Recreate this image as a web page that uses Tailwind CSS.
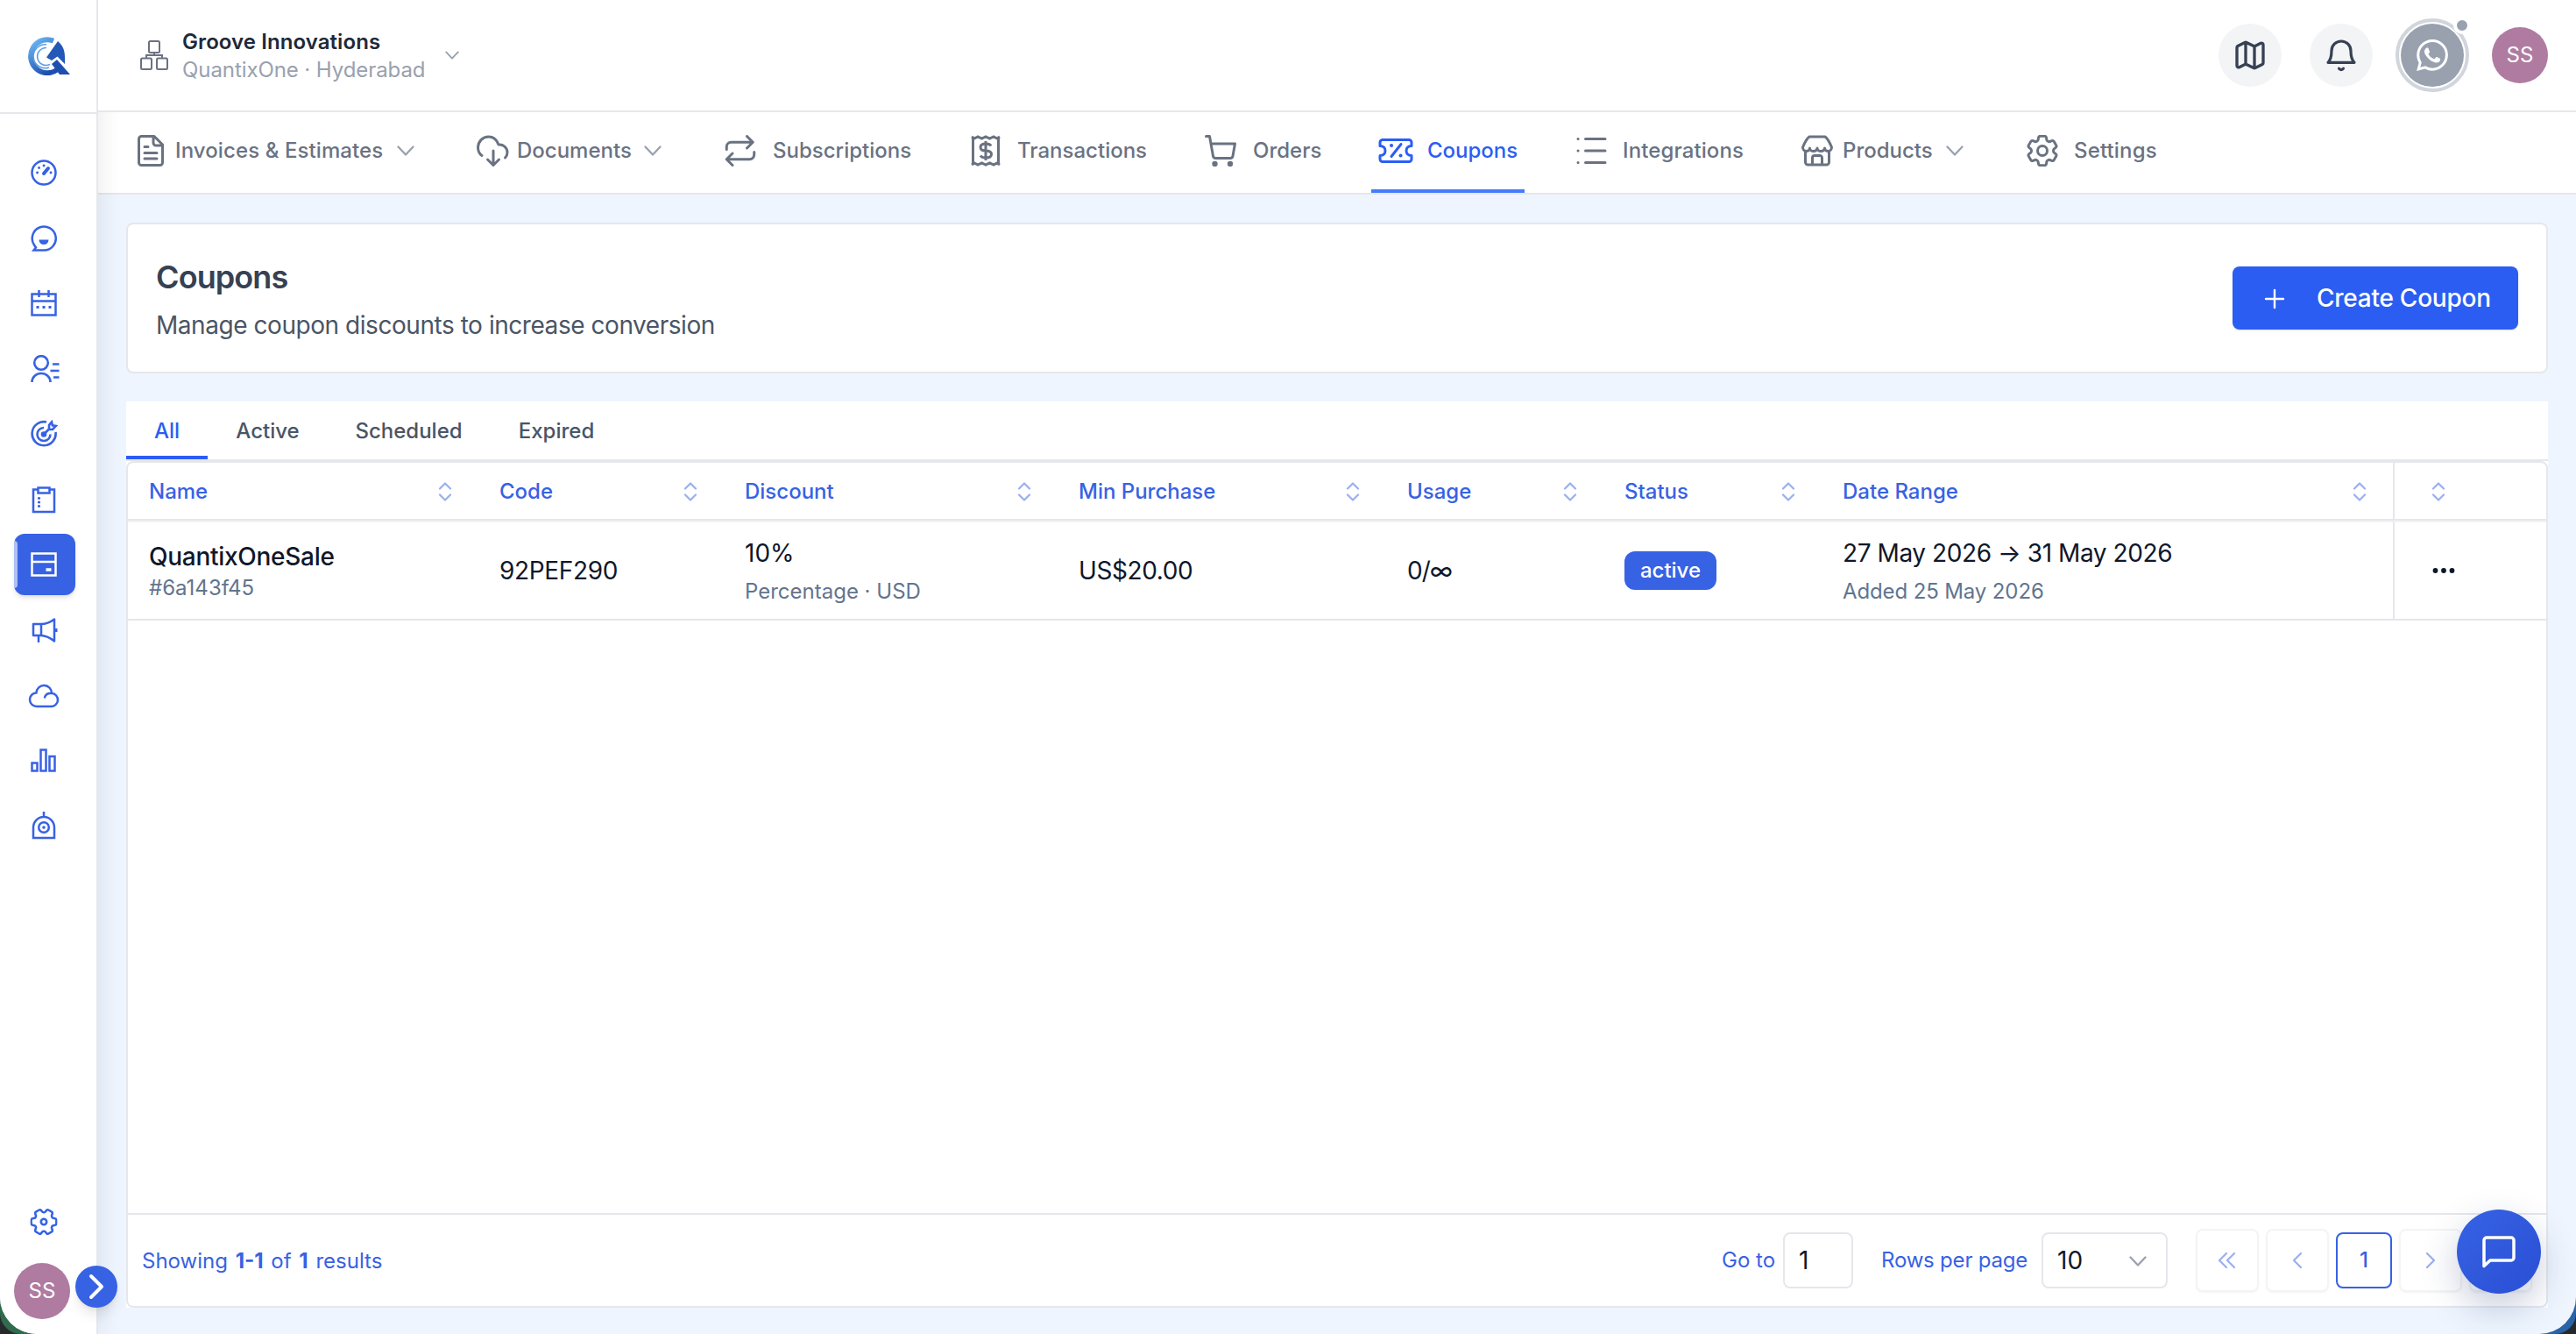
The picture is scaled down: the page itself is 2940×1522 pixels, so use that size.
<!DOCTYPE html>
<html lang="en">
<head>
    <meta charset="UTF-8">
    <meta name="viewport" content="width=device-width, initial-scale=1.0">
    <title>Coupons - QuantixOne</title>
    <script src="https://cdn.jsdelivr.net/npm/@tailwindcss/browser@4"></script>
</head>
<body class="w-[2940px] h-[1522px] overflow-hidden bg-[#26292c] font-['Inter',sans-serif] text-2xl text-gray-500">
    <!-- Shared icons -->
    <svg class="hidden">
        <symbol id="chevron-down" viewBox="0 0 20 20"><path d="M1.500 5.500l8.500 9 8.500-9" fill="none" stroke="currentColor" stroke-width="2.300" stroke-linecap="round" stroke-linejoin="round"/></symbol>
        <symbol id="sort" viewBox="0 0 16 24"><path d="M2 8.500l6-6 6 6M2 15.500l6 6 6-6" fill="none" stroke="currentColor" stroke-width="2.200" stroke-linecap="round" stroke-linejoin="round"/></symbol>
        <symbol id="cog" viewBox="2.300 2.300 19.400 19.400"><path fill="none" stroke="currentColor" stroke-linejoin="round" d="M9.594 3.940c.09-.542.56-.94 1.110-.94h2.593c.55 0 1.020.398 1.110.94l.213 1.281c.063.374.313.686.645.87.074.04.147.083.22.127.325.196.72.257 1.075.124l1.217-.456a1.125 1.125 0 0 1 1.370.49l1.296 2.247a1.125 1.125 0 0 1-.26 1.431l-1.003.827c-.293.241-.438.613-.43.992a7.723 7.723 0 0 1 0 .255c-.008.378.137.75.43.991l1.004.827c.424.35.534.955.26 1.430l-1.298 2.247a1.125 1.125 0 0 1-1.369.491l-1.217-.456c-.355-.133-.75-.072-1.076.124a6.470 6.470 0 0 1-.22.128c-.331.183-.581.495-.644.869l-.213 1.281c-.09.543-.56.94-1.110.94h-2.594c-.55 0-1.019-.398-1.110-.94l-.213-1.281c-.062-.374-.312-.686-.644-.87a6.520 6.520 0 0 1-.22-.127c-.325-.196-.72-.257-1.076-.124l-1.217.456a1.125 1.125 0 0 1-1.369-.49l-1.297-2.247a1.125 1.125 0 0 1 .26-1.431l1.004-.827c.292-.24.437-.613.43-.991a6.932 6.932 0 0 1 0-.255c.007-.38-.138-.751-.43-.992l-1.004-.827a1.125 1.125 0 0 1-.26-1.430l1.297-2.247a1.125 1.125 0 0 1 1.370-.491l1.216.456c.356.133.751.072 1.076-.124.072-.044.146-.086.22-.128.332-.183.582-.495.644-.869l.214-1.280Z"/></symbol>
    </svg>

    <div class="h-full overflow-hidden rounded-b-[24px] bg-linear-to-r from-[#2f6b4c] to-[#2a64a8]">
    <div class="relative flex h-full overflow-hidden bg-[#eef5fe] rounded-b-[42px]">
        <!-- Sidebar -->
        <aside class="relative z-10 w-28 shrink-0 flex flex-col bg-white border-r-2 border-gray-200 shadow-[4px_0_24px_rgba(0,0,0,0.08)] text-[#3762e4]">
            <div class="h-[130px] shrink-0 border-b-2 border-gray-200 pl-8 pt-[42px]">
                <svg class="w-12 h-[44px]" viewBox="0 0 48 44">
                    <defs>
                        <linearGradient id="logo" x1="0" y1="0" x2="0.6" y2="1"><stop offset="0" stop-color="#6fbcf5"/><stop offset="1" stop-color="#1f4fae"/></linearGradient>
                    </defs>
                    <path d="M29 4.500A19 19 0 1 0 34 37" fill="none" stroke="url(#logo)" stroke-width="6"/>
                    <path d="M21 8.800A13.500 13.500 0 1 0 24 35M21 12.500A10 10 0 1 0 25 31.500" fill="none" stroke="#5b9de6" stroke-width="1.600"/>
                    <path d="M21 23.500L34 5c6 5 8 11 8 18v8L33.500 22.500 27 27z" fill="#2458b8"/>
                    <path d="M27 31l6-5 15 17H36z" fill="#1f4fae"/>
                </svg>
            </div>
            <nav class="flex flex-col pt-[30px] pl-4">
                <a class="w-[67px] h-[74.500px] flex items-center justify-center">
                    <svg class="w-8 h-8" viewBox="0 0 32 32" fill="none" stroke="currentColor" stroke-width="2.500"><circle cx="16" cy="16" r="13.500"/><path d="M16 17l5-6" stroke-width="4" stroke-linecap="round"/><path d="M8.500 16h.1M10.500 10.500h.1M16 8h.1M24 16h.1" stroke-width="2.800" stroke-linecap="round"/></svg>
                </a>
                <a class="w-[67px] h-[74.500px] flex items-center justify-center">
                    <svg class="w-8 h-8" viewBox="0 0 32 32" fill="none" stroke="currentColor" stroke-width="2.500"><path d="M4.500 29.500H16a13.500 13.500 0 1 0-11-6l2 3z"/><path d="M10.500 17.500h11a5.500 5.500 0 0 1-11 0z" fill="currentColor" stroke="none"/></svg>
                </a>
                <a class="w-[67px] h-[74.500px] flex items-center justify-center">
                    <svg class="w-8 h-8" viewBox="0 0 32 32" fill="none" stroke="currentColor" stroke-width="2.500"><path d="M2.500 5.500h27v24h-27zM2.500 13.500h27M10.500 1v8M21.500 1v8"/><path d="M7.500 20.500h3M14.500 20.500h3M21.500 20.500h3" stroke-width="3"/></svg>
                </a>
                <a class="w-[67px] h-[74.500px] flex items-center justify-center">
                    <svg class="w-9 h-8" viewBox="0 0 36 32" fill="none" stroke="currentColor" stroke-width="2.600"><circle cx="15" cy="9" r="7.800"/><path d="M4.500 31c0-6 5-10 10.500-10s10.500 4 10.500 10M28 10.500h7.500M25.500 18h10M29 25.500h6.500"/></svg>
                </a>
                <a class="w-[67px] h-[74.500px] flex items-center justify-center">
                    <svg class="w-8 h-8" viewBox="0 0 32 32" fill="none" stroke="currentColor" stroke-width="2.600"><path d="M19 2.500A13.500 13.500 0 1 0 29.500 14M16 9a7.500 7.500 0 1 0 7.500 7.500"/><circle cx="16" cy="16.500" r="2" fill="currentColor"/><path d="M16 16.500l6-6M22 11V6l3-3.500.8 3.800 4 .7-3.800 4z"/></svg>
                </a>
                <a class="w-[67px] h-[74.500px] flex items-center justify-center">
                    <svg class="w-8 h-8" viewBox="0 0 32 32" fill="none" stroke="currentColor" stroke-width="2.500"><path d="M9 4.500H4v25.500h24V4.500h-5M9.500 2.500h13v6h-13z"/><path d="M9 14.500h3M9 19h3M9 23.500h3" stroke-width="2.600"/></svg>
                </a>
                <!-- Active item -->
                <a class="relative w-[70px] h-[70px] my-[2.250px] flex items-center justify-center pr-[3px] rounded-xl bg-[#3762e4] text-white shadow-md overflow-hidden">
                    <span class="absolute left-0 top-2 bottom-2 w-1 rounded-r bg-white/60"></span>
                    <svg class="w-8 h-8" viewBox="0 0 32 32" fill="none" stroke="currentColor" stroke-width="2.500"><path d="M2.500 3.500h27v25h-27zM2.500 13h27" /><path d="M18.500 22h6" stroke-width="3.500"/></svg>
                </a>
                <a class="w-[67px] h-[74.500px] flex items-center justify-center">
                    <svg class="w-8 h-8" viewBox="0 0 32 32" fill="none" stroke="currentColor" stroke-width="2.500" stroke-linejoin="round"><path d="M4 9h8.500c6 0 11-2 15.500-5.500v25C23.500 25 18.500 22 12.500 22H4zM13 9v13M10 22v8"/><path d="M30 14v4" stroke-width="3"/></svg>
                </a>
                <a class="w-[67px] h-[74.500px] flex items-center justify-center">
                    <svg class="w-8 h-8 overflow-visible" viewBox="0 0 32 32" fill="none" stroke="currentColor" stroke-width="2.500" stroke-linecap="round"><path d="M7.500 13.500A8.500 8.500 0 0 1 25 14a7.500 7.500 0 0 1-1 15H8a7.500 7.500 0 0 1-.5-15.500M17 18.500c1-3 4-5 8-4.500"/></svg>
                </a>
                <a class="w-[67px] h-[74.500px] flex items-center justify-center">
                    <svg class="w-8 h-8" viewBox="0 0 32 32" fill="none" stroke="currentColor" stroke-width="2.500"><path d="M2.500 18.500h6v9h-6zM12.500 3.500h6v24h-6zM22.500 11h6v16.500h-6z"/></svg>
                </a>
                <a class="w-[67px] h-[74.500px] flex items-center justify-center">
                    <svg class="w-8 h-8" viewBox="0 0 32 32" fill="none" stroke="currentColor" stroke-width="2.500"><path d="M4 30V18a12 12 0 0 1 24 0v12zM16 0v6"/><circle cx="16" cy="18" r="5.800"/><circle cx="16" cy="18" r="1.800" fill="currentColor" stroke="none"/></svg>
                </a>
            </nav>
            <div class="mt-auto pl-4 pb-[17px] flex flex-col gap-[31px]">
                <svg class="w-8 h-8 ml-[18px]" viewBox="0 0 32 32" fill="none" stroke="currentColor"><use href="#cog" width="31" height="31" x="0.500" y="0.500" stroke-width="1.600" transform="rotate(90 16 16)"/><circle cx="16" cy="16" r="3.200" stroke-width="2.600"/></svg>
                <div class="w-16 h-16 rounded-full bg-[#af7ba1] text-white flex items-center justify-center">SS</div>
            </div>
            <button class="absolute left-[86px] top-[1444px] w-12 h-12 rounded-full bg-[#3762e4] shadow-lg flex items-center justify-center">
                <svg class="w-4 h-7 overflow-visible" viewBox="0 0 16 28" fill="none" stroke="#fff" stroke-width="4" stroke-linecap="round" stroke-linejoin="round"><path d="M2 2l12 12L2 26"/></svg>
            </button>
        </aside>

        <div class="flex-1 flex flex-col">
            <!-- Top bar -->
            <header class="relative z-20 h-32 shrink-0 flex items-center bg-white border-b-2 border-gray-200 pl-12 pr-8">
                <svg class="w-8 h-9 text-gray-500" viewBox="0 0 32 36" fill="none" stroke="currentColor" stroke-width="2"><rect x="10" y="2" width="12" height="13" rx="1.500"/><rect x="1" y="21.500" width="12" height="12.500" rx="1.500"/><rect x="19" y="21.500" width="12" height="12.500" rx="1.500"/><path d="M16 15v3M7 21v-3h18v3"/></svg>
                <div class="ml-4 w-[300px] pt-0.5 leading-8 whitespace-nowrap">
                    <p class="font-semibold text-gray-800 tracking-[0.080px]">Groove Innovations</p>
                    <p class="text-gray-400 tracking-[-0.080px]">QuantixOne · Hyderabad</p>
                </div>
                <svg class="w-4 h-4 text-gray-400"><use href="#chevron-down"/></svg>
                <div class="ml-auto flex items-center gap-8">
                    <button class="w-18 h-18 rounded-full bg-gray-100 text-gray-700 flex items-center justify-center">
                        <svg class="w-10 h-10" viewBox="0 0 24 24" fill="none" stroke="currentColor" stroke-width="2" stroke-linecap="round" stroke-linejoin="round"><path d="M9 6.750V15m6-6v8.250m.503 3.498 4.875-2.437c.381-.19.622-.58.622-1.006V4.820c0-.836-.880-1.380-1.628-1.006l-3.869 1.934c-.317.159-.690.159-1.006 0L9.503 3.252a1.125 1.125 0 0 0-1.006 0L3.622 5.689C3.240 5.880 3 6.270 3 6.695V19.180c0 .836.880 1.380 1.628 1.006l3.869-1.934c.317-.159.690-.159 1.006 0l4.994 2.497c.317.158.690.158 1.006 0Z M9 3.200V18M15 6v14.700"/></svg>
                    </button>
                    <button class="w-18 h-18 rounded-full bg-gray-100 text-gray-700 flex items-center justify-center">
                        <svg class="w-9 h-9 overflow-visible" viewBox="0 0 36 36" fill="none" stroke="currentColor" stroke-width="3.200" stroke-linecap="round" stroke-linejoin="round"><path d="M3 26.300h30c-3-3-4-7-4-13.300a11 11 0 0 0-22 0c0 6.300-1 10.300-4 13.300z"/><path d="M15.500 33.200a3 3 0 0 0 5 0"/></svg>
                    </button>
                    <button class="relative w-18 h-18 rounded-full bg-gray-400 text-white ring-2 ring-white outline-4 outline-offset-2 outline-gray-300 flex items-center justify-center">
                        <svg class="w-9 h-9" viewBox="0 0 24 24" fill="currentColor"><path d="M17.472 14.382c-.297-.149-1.758-.867-2.030-.967-.273-.099-.471-.148-.670.150-.197.297-.767.966-.940 1.164-.173.199-.347.223-.644.075-.297-.150-1.255-.463-2.390-1.475-.883-.788-1.480-1.761-1.653-2.059-.173-.297-.018-.458.130-.606.134-.133.298-.347.446-.520.149-.174.198-.298.298-.497.099-.198.050-.371-.025-.520-.075-.149-.669-1.612-.916-2.207-.242-.579-.487-.500-.669-.510-.173-.008-.371-.010-.570-.010-.198 0-.520.074-.792.372-.272.297-1.040 1.016-1.040 2.479 0 1.462 1.065 2.875 1.213 3.074.149.198 2.096 3.200 5.077 4.487.709.306 1.262.489 1.694.625.712.227 1.360.195 1.871.118.571-.085 1.758-.719 2.006-1.413.248-.694.248-1.289.173-1.413-.074-.124-.272-.198-.570-.347M12.050 21.785h-.004a9.870 9.870 0 0 1-5.031-1.378l-.361-.214-3.741.982.998-3.648-.235-.374a9.860 9.860 0 0 1-1.510-5.260c.001-5.450 4.436-9.884 9.888-9.884a9.820 9.820 0 0 1 9.884 9.892c-.003 5.450-4.437 9.884-9.888 9.884M12.050 0C5.495 0 .160 5.335.157 11.892c0 2.096.547 4.142 1.588 5.945L.057 24l6.305-1.654a11.880 11.880 0 0 0 5.683 1.448h.005c6.554 0 11.890-5.335 11.893-11.893A11.820 11.820 0 0 0 12.050 0"/></svg>
                        <span class="absolute -top-2 -right-2 w-5 h-5 rounded-full bg-gray-400 border-4 border-white"></span>
                    </button>
                    <div class="w-16 h-16 rounded-full bg-[#af7ba1] text-white flex items-center justify-center">SS</div>
                </div>
            </header>

            <!-- Section navigation -->
            <nav class="h-[94px] shrink-0 flex bg-white border-b-2 border-gray-200 pl-[42px] font-medium whitespace-nowrap">
                <a class="w-[390px] pb-1 flex items-center">
                    <svg class="w-9 h-9" viewBox="0 0 36 36" fill="none" stroke="currentColor" stroke-width="3" stroke-linejoin="round" stroke-linecap="round"><path d="M7 1.500h15l9.500 9.500v20.500a3 3 0 0 1-3 3H7.500a3 3 0 0 1-3-3V4.500a3 3 0 0 1 3-3zM21 2v7a3 3 0 0 0 3 3h7M11 13.500h4M11 20.500h14M11 27h14"/></svg>
                    <span class="ml-[10px] w-[253px] tracking-[0.100px]">Invoices &amp; Estimates</span>
                    <svg class="w-5 h-5 text-gray-400"><use href="#chevron-down"/></svg>
                </a>
                <a class="w-[283px] pb-1 flex items-center">
                    <svg class="w-9 h-9 overflow-visible" viewBox="0 0 36 36" fill="none" stroke="currentColor" stroke-width="3" stroke-linejoin="round" stroke-linecap="round"><path d="M6 23.500C3 21.500 1.500 18 1.500 14 2 7 7 2 13.500 2 19 2 23 5.500 25 11c5-.5 10 3 10 9 0 2.500-1 4.500-2.500 6M19 18v16M12.500 28l6.500 6.500 6.500-6.500"/></svg>
                    <span class="ml-[10px] w-[145px]">Documents</span>
                    <svg class="w-5 h-5 text-gray-400"><use href="#chevron-down"/></svg>
                </a>
                <a class="w-[280px] pb-1 flex items-center">
                    <svg class="w-9 h-9" viewBox="0 0 24 24" fill="none" stroke="currentColor" stroke-width="2" stroke-linecap="round" stroke-linejoin="round"><path d="m17 1 4.500 4.500L17 10M1.500 11V9A3.500 3.500 0 0 1 5 5.500h16M6 23l-4.500-4.500L6 14M22.500 13v2a3.500 3.500 0 0 1-3.500 3.500H2"/></svg>
                    <span class="ml-[19px]">Subscriptions</span>
                </a>
                <a class="w-[268px] pb-1 flex items-center">
                    <svg class="w-9 h-9" viewBox="0 0 36 36" fill="none" stroke="currentColor" stroke-width="3"><path d="M3.500 2v32M32.500 2v32M2 2l3 2 4-2 4.500 2L18 2l4.500 2L27 2l4 2 3-2M2 34l3-2 4 2 4.500-2 4.500 2 4.500-2 4.500 2 4-2 3 2"/><path d="M24 12.500c-1-2-3-2.500-6-2.500-4 0-6 1.500-6 4s2 4 6 4 6.500 1.500 6.500 4-2.500 4-6.500 4c-3 0-5-1-6-2.500M18 7v22"/></svg>
                    <span class="ml-[18px]">Transactions</span>
                </a>
                <a class="w-[190px] pb-1 flex items-center">
                    <svg class="w-9 h-9" viewBox="0 0 36 36" fill="none" stroke="currentColor" stroke-width="3" stroke-linecap="round" stroke-linejoin="round"><path d="M1.500 1.500h4l4 22.500a3 3 0 0 0 3 2.500H29a3 3 0 0 0 3-2.500L34.500 10H7"/><circle cx="11.500" cy="33" r="1.700" fill="currentColor"/><circle cx="29" cy="33" r="1.700" fill="currentColor"/></svg>
                    <span class="ml-[19px]">Orders</span>
                </a>
                <a class="w-[175px] mr-[55px] pl-2 flex items-center text-[#2b5df5] border-b-4 border-[#447dfc]">
                    <svg class="w-10 h-9" viewBox="0 0 40 36" fill="none" stroke="currentColor" stroke-width="3" stroke-linecap="round" stroke-linejoin="round"><path d="M5 5.500h30a3 3 0 0 1 3 3v4c-4 0-6 2.500-6 5.500s2 5.500 6 5.500v4a3 3 0 0 1-3 3H5a3 3 0 0 1-3-3v-4c4 0 6-2.500 6-5.500s-2-5.500-6-5.500v-4a3 3 0 0 1 3-3z"/><path d="M26 10.500l-11 14"/><path d="M15 12h.1M25.500 23.500h.1" stroke-width="4"/></svg>
                    <span class="ml-[16px]">Coupons</span>
                </a>
                <a class="w-[261px] pb-1 pl-1 flex items-center">
                    <svg class="w-9 h-9" viewBox="0 0 36 36" fill="none" stroke="currentColor" stroke-width="3" stroke-linecap="round"><path d="M10.500 4.500H33M10.500 18H33M10.500 31.500H33M2 4.500h.1M2 18h.1M2 31.500h.1"/></svg>
                    <span class="ml-[17px] tracking-[0.100px]">Integrations</span>
                </a>
                <a class="w-[257px] pb-1 flex items-center">
                    <svg class="w-9 h-9" viewBox="0 0 36 36" fill="none" stroke="currentColor" stroke-width="3" stroke-linecap="round" stroke-linejoin="round"><path d="M9 2h18c3 2 5 6 7.500 12 0 2.500-2 4.500-4 4.500s-4-1.500-4-3.500c0 2-2 3.500-4.200 3.500S18 17 18 15c0 2-2 3.500-4.200 3.500S9.500 17 9.500 15c0 2-2 3.500-4 3.500s-4-2-4-4.500C4 8 6 4 9 2zM4.500 19v12a3 3 0 0 0 3 3h21a3 3 0 0 0 3-3V19M12.500 34v-8a2.500 2.500 0 0 1 2.500-2.500h6a2.500 2.500 0 0 1 2.500 2.500v8"/></svg>
                    <span class="ml-[11px] w-[118px]">Products</span>
                    <svg class="w-5 h-5 text-gray-400"><use href="#chevron-down"/></svg>
                </a>
                <a class="pb-1 flex items-center">
                    <svg class="w-9 h-9" viewBox="0 0 36 36" fill="none" stroke="currentColor"><use href="#cog" width="36" height="36" stroke-width="1.600"/><circle cx="18" cy="18" r="5.500" stroke-width="3"/></svg>
                    <span class="ml-[18px] tracking-[0.150px]">Settings</span>
                </a>
            </nav>

            <main class="flex-1 flex flex-col px-8 pt-8 pb-[30px]">
                <section class="h-[172px] shrink-0 flex items-center justify-between bg-white border-2 border-gray-200 rounded-lg px-8">
                    <div class="pt-1">
                        <h1 class="text-[36px] leading-[46px] font-semibold text-gray-700 tracking-tight">Coupons</h1>
                        <p class="mt-3 text-[28px] leading-10 text-gray-600 tracking-[-0.450px]">Manage coupon discounts to increase conversion</p>
                    </div>
                    <button class="w-[326px] h-[72px] rounded-lg bg-[#2b5df2] text-white text-[28px] font-medium tracking-[-0.250px] shadow-sm flex items-center pt-0.5 pl-[36px] whitespace-nowrap">
                        <svg class="w-6 h-6 mr-[36px]" viewBox="0 0 24 24" stroke="currentColor" stroke-width="2.400" stroke-linecap="round"><path d="M12 2v20M2 12h20"/></svg>
                        Create Coupon
                    </button>
                </section>

                <!-- Status tabs -->
                <div class="mt-8 h-[68px] shrink-0 flex bg-white border-b-2 border-gray-200 font-medium text-gray-600">
                    <button class="w-[93px] pt-[5px] border-b-4 border-[#2b5df5] text-[#2b5df5]">All</button>
                    <button class="w-[137px] pt-px">Active</button>
                    <button class="w-[185px] pt-px">Scheduled</button>
                    <button class="w-[152px] pt-px">Expired</button>
                </div>

                <div class="flex-1 bg-white">
                    <section class="h-full flex flex-col bg-white border-2 border-gray-200 rounded-lg overflow-hidden">
                        <table class="w-full table-fixed border-separate border-spacing-0 text-left whitespace-nowrap">
                            <colgroup>
                                <col class="w-[400px]"><col class="w-[280px]"><col class="w-[381px]"><col class="w-[375px]"><col class="w-[248px]"><col class="w-[249px]"><col class="w-[652px]"><col>
                            </colgroup>
                            <thead>
                                <tr class="h-[66px] text-[#3762e4]">
                                    <th class="border-b-2 border-gray-200 px-6 pt-0.5 font-medium"><div class="flex items-center justify-between pr-[6px]">Name<svg class="w-4 h-6 opacity-50"><use href="#sort"/></svg></div></th>
                                    <th class="border-b-2 border-gray-200 px-6 pt-0.5 font-medium"><div class="flex items-center justify-between pr-[6px]">Code<svg class="w-4 h-6 opacity-50"><use href="#sort"/></svg></div></th>
                                    <th class="border-b-2 border-gray-200 px-6 pt-0.5 font-medium"><div class="flex items-center justify-between pr-[6px]">Discount<svg class="w-4 h-6 opacity-50"><use href="#sort"/></svg></div></th>
                                    <th class="border-b-2 border-gray-200 px-6 pt-0.5 font-medium"><div class="flex items-center justify-between pr-[6px]">Min Purchase<svg class="w-4 h-6 opacity-50"><use href="#sort"/></svg></div></th>
                                    <th class="border-b-2 border-gray-200 px-6 pt-0.5 font-medium"><div class="flex items-center justify-between pr-[6px]">Usage<svg class="w-4 h-6 opacity-50"><use href="#sort"/></svg></div></th>
                                    <th class="border-b-2 border-gray-200 px-6 pt-0.5 font-medium"><div class="flex items-center justify-between pr-[6px]">Status<svg class="w-4 h-6 opacity-50"><use href="#sort"/></svg></div></th>
                                    <th class="border-b-2 border-gray-200 px-6 pt-0.5 font-medium"><div class="flex items-center justify-between pr-[6px]">Date Range<svg class="w-4 h-6 opacity-50"><use href="#sort"/></svg></div></th>
                                    <th class="border-b-2 border-l-2 border-gray-200 pt-0.5 pl-[42px]"><svg class="w-4 h-6 opacity-50"><use href="#sort"/></svg></th>
                                </tr>
                            </thead>
                            <tbody>
                                <tr class="h-[114px] text-[28px] text-slate-900">
                                    <td class="border-t-2 border-t-gray-100 border-b-2 border-b-gray-200 px-6">
                                        <p class="leading-[40px] font-medium tracking-[-0.280px]">QuantixOneSale</p>
                                        <p class="text-2xl leading-8 text-slate-500">#6a143f45</p>
                                    </td>
                                    <td class="border-t-2 border-t-gray-100 border-b-2 border-b-gray-200 px-6 pt-0.5 tracking-[-0.350px]">92PEF290</td>
                                    <td class="border-t-2 border-t-gray-100 border-b-2 border-b-gray-200 px-6 pt-1">
                                        <p class="leading-[40px]">10%</p>
                                        <p class="mt-1 text-2xl leading-10 text-slate-500">Percentage · USD</p>
                                    </td>
                                    <td class="border-t-2 border-t-gray-100 border-b-2 border-b-gray-200 px-6 pt-0.5 tracking-[-0.400px]">US$20.00</td>
                                    <td class="border-t-2 border-t-gray-100 border-b-2 border-b-gray-200 px-6 pt-0.5 tracking-[-1px]">0/∞</td>
                                    <td class="border-t-2 border-t-gray-100 border-b-2 border-b-gray-200 px-6">
                                        <span class="w-[105px] h-11 rounded-xl bg-[#3762e4] text-white text-2xl font-medium flex items-center justify-center">active</span>
                                    </td>
                                    <td class="border-t-2 border-t-gray-100 border-b-2 border-b-gray-200 px-6 pt-1">
                                        <p class="leading-[40px] tracking-[-0.420px]">27 May 2026 → 31 May 2026</p>
                                        <p class="mt-1 text-2xl leading-10 text-slate-500 tracking-[-0.120px]">Added 25 May 2026</p>
                                    </td>
                                    <td class="border-t-2 border-t-gray-100 border-b-2 border-b-gray-200 border-l-2 border-l-gray-200 pl-[42px]">
                                        <svg class="w-7 h-7" viewBox="0 0 28 28" fill="currentColor"><circle cx="4.500" cy="14" r="2.900"/><circle cx="14" cy="14" r="2.900"/><circle cx="23.500" cy="14" r="2.900"/></svg>
                                    </td>
                                </tr>
                            </tbody>
                        </table>

                        <!-- Pagination -->
                        <footer class="mt-auto h-[106px] flex items-center border-t-2 border-gray-200 px-4 text-[#3762e4] whitespace-nowrap">
                            <p class="pt-px">Showing <b class="mx-[2px] font-bold">1-1</b> of <b class="mx-[2px] font-bold">1</b> results</p>
                            <div class="ml-auto flex items-center">
                                <span class="w-[70px]">Go to</span>
                                <span class="w-20 h-16 rounded-lg border-2 border-gray-200 pl-4 pt-0.5 flex items-center text-[28px] text-slate-900">1</span>
                                <span class="ml-8 w-[183px] tracking-[-0.200px]">Rows per page</span>
                                <span class="w-36 h-16 rounded-lg border-2 border-gray-200 pl-4 pt-0.5 pr-[22px] flex items-center justify-between text-[28px] text-slate-900">10<svg class="w-5 h-5 text-gray-400"><use href="#chevron-down"/></svg></span>
                                <div class="ml-8 flex items-center gap-2">
                                    <span class="w-18 h-18 rounded-lg border-2 border-gray-100 shadow-xs flex items-center justify-center"><svg class="w-6 h-6 opacity-50" viewBox="0 0 24 24" fill="none" stroke="currentColor" stroke-width="2.200" stroke-linecap="round" stroke-linejoin="round"><path d="M11 4l-8 8 8 8M20 4l-8 8 8 8"/></svg></span>
                                    <span class="w-18 h-18 rounded-lg border-2 border-gray-100 shadow-xs flex items-center justify-center"><svg class="w-6 h-6 opacity-50" viewBox="0 0 24 24" fill="none" stroke="currentColor" stroke-width="2.200" stroke-linecap="round" stroke-linejoin="round"><path d="M16 4l-8 8 8 8"/></svg></span>
                                    <span class="w-16 h-16 rounded-lg border-2 border-[#3762e4] shadow-xs flex items-center justify-center font-medium">1</span>
                                    <span class="w-18 h-18 rounded-lg border-2 border-gray-100 shadow-xs flex items-center justify-center"><svg class="w-6 h-6 opacity-50" viewBox="0 0 24 24" fill="none" stroke="currentColor" stroke-width="2.200" stroke-linecap="round" stroke-linejoin="round"><path d="M8 4l8 8-8 8"/></svg></span>
                                    <span class="w-18 h-18 rounded-lg border-2 border-gray-100 shadow-xs"></span>
                                </div>
                            </div>
                        </footer>
                    </section>
                </div>
            </main>
        </div>

        <!-- Chat widget -->
        <button class="absolute right-10 bottom-[46px] w-24 h-24 rounded-full bg-linear-to-br from-[#3762e4] to-[#2a4fd4] shadow-[0_16px_40px_rgba(30,50,110,0.25)] text-white flex items-center justify-center">
            <svg class="w-10 h-10" viewBox="0 0 40 40" fill="none" stroke="currentColor" stroke-width="3.500" stroke-linecap="round" stroke-linejoin="round"><path d="M6 4h28a3 3 0 0 1 3 3v20a3 3 0 0 1-3 3H10l-7 6.500V7a3 3 0 0 1 3-3z"/></svg>
        </button>
    </div>
    </div>
</body>
</html>
